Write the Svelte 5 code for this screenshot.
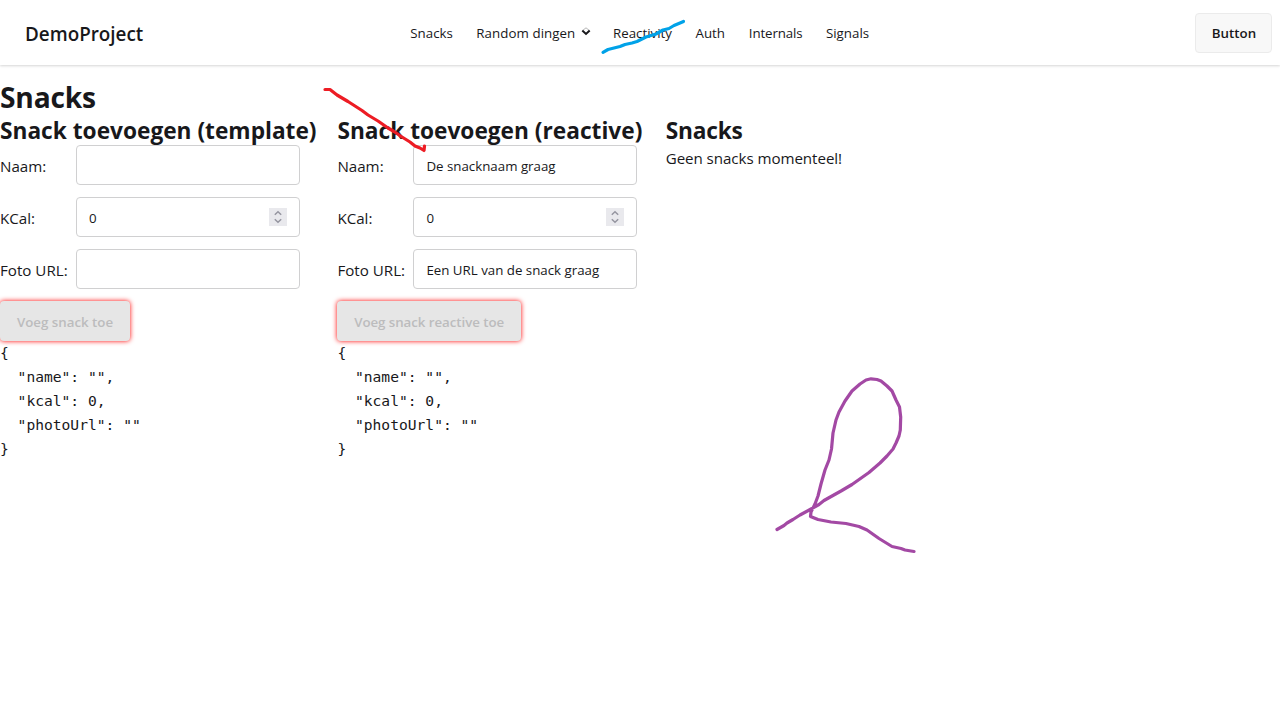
<script>
  const links = ['Snacks', 'Random dingen', 'Reactivity', 'Auth', 'Internals', 'Signals'];
  const forms = [
    { title: 'Snack toevoegen (template)', name: '', photo: '', submit: 'Voeg snack toe', cls: 'template' },
    {
      title: 'Snack toevoegen (reactive)',
      name: 'De snacknaam graag',
      photo: 'Een URL van de snack graag',
      submit: 'Voeg snack reactive toe',
      cls: 'reactive'
    }
  ];
  const json = JSON.stringify({ name: '', kcal: 0, photoUrl: '' }, null, 2);
</script>

<header>
  <a class="brand" href="#home">DemoProject</a>
  <nav>
    {#each links as link}
      <a href="#{link}">
        {link}
        {#if link === 'Random dingen'}
          <svg class="caret" width="10" height="9" viewBox="0 0 10 9" fill="none">
            <path d="M2 3.2 5 .8 8 3.2" stroke="#b5b5b5" stroke-width="1" />
            <path d="M1.3 3.4 5 6.9 8.7 3.4" stroke="#18181b" stroke-width="2" />
          </svg>
        {/if}
      </a>
    {/each}
  </nav>
  <button class="btn">Button</button>
</header>

<main>
  <h1>Snacks</h1>
  <div class="columns">
    {#each forms as form}
      <section class={form.cls}>
        <h2>{form.title}</h2>
        <form>
          <span class="label">Naam:</span>
          <div class="input">{form.name}</div>
          <span class="label">KCal:</span>
          <div class="input">
            0
            <svg class="spin" width="18" height="18" viewBox="0 0 18 18" fill="none">
              <rect width="18" height="18" fill="#e9e9ed" />
              <path d="M5.8 6.8 9 3.8l3.2 3M5.8 11.2l3.2 3 3.2-3" stroke="#9595a0" stroke-width="1.5" />
            </svg>
          </div>
          <span class="label">Foto URL:</span>
          <div class="input">{form.photo}</div>
        </form>
        <button class="submit" disabled>{form.submit}</button>
        <pre>{json}</pre>
      </section>
    {/each}
    <section>
      <h2>Snacks</h2>
      <p>Geen snacks momenteel!</p>
    </section>
  </div>
</main>

<svg class="ink" width="1280" height="720" viewBox="0 0 1280 720" fill="none" stroke-width="3.2" stroke-linecap="round" stroke-linejoin="round">
  <path stroke="#00a2e8" d="M603 52.300 608 49.5 620 46.500 625 44.500 632 43 637 41.500 646 37 656 34 663 30 669 28.500 674 25.500 680 23 683.500 21.500" />
  <path stroke="#ed1c24" d="M325 89.500H330L337 95 348 101.500 355 106 362 110.500 368 115 378 121 388 128 394 131.500 402 137 410 142 415 146 420 148 424 150.500 424.500 146" />
  <path stroke="#a349a4" d="M777 529.500 784 525.500 787 523 793 519.500 800 515 811 509 819 504.500 824 500.500 841 491 852 484.500 869 472.500 880 463 887 456 893 449 896 443 899 436 900.300 430 900.700 417 899.500 407 896 400 892 391 887 386 881 381 877 379.500 871 378.800 866 380 860 384 852 391 845 401 839 412 836 420 833 433 831.500 449 829 460 825 470 821 484 818 496 815 504 811 512 810.500 516.500 818 519.500 831 522 846 523.500 859 526.500 867 530 879 538.500 892 546.500 901 548.500 905 550 914 551.500" />
</svg>

<style>
  :global(body) {
    background: #fff;
    color: #18181b;
    font: 15.15px/24px "Open Sans", sans-serif;
    overflow: hidden;
  }
  header {
    box-sizing: border-box;
    height: 65px;
    padding: 0 8px 0 25px;
    display: grid;
    grid-template-columns: 385.3px 1fr 77px;
    align-items: center;
    box-shadow: 0 1px 3px rgba(0, 0, 0, 0.1), 0 1px 2px rgba(0, 0, 0, 0.07);
  }
  a {
    color: inherit;
    text-decoration: none;
  }
  .brand {
    font-size: 18.85px;
    font-weight: 600;
    padding-top: 2px;
  }
  nav {
    display: grid;
    grid-template-columns: 66px 136.700px 82.500px 53.300px 77.200px 60px;
    font-size: 13.3px;
    line-height: 20px;
    white-space: nowrap;
    padding-top: 1px;
  }
  nav a {
    display: flex;
    gap: 6px;
  }
  nav a:nth-child(2) {
    letter-spacing: 0.07px;
  }
  nav a:nth-child(5) {
    letter-spacing: -0.12px;
  }
  .caret {
    margin-top: 4px;
  }
  .btn {
    height: 40px;
    padding: 1px 0 0 1px;
    border: 1px solid #ebebeb;
    border-radius: 4px;
    background: #f8f8f8;
    color: #18181b;
    font: 600 13.3px/20px "Open Sans", sans-serif;
  }
  h1,
  h2,
  p,
  pre {
    margin: 0;
  }
  main {
    padding-top: 14px;
  }
  h1 {
    font-size: 28.2px;
    line-height: 36px;
    letter-spacing: -0.2px;
  }
  .columns {
    display: grid;
    grid-template-columns: 317.400px 308.300px 1fr;
    column-gap: 20px;
  }
  h2 {
    box-sizing: border-box;
    height: 30px;
    padding-top: 1px;
    font-size: 22.7px;
    line-height: 30px;
    white-space: nowrap;
  }
  section:last-child h2 {
    letter-spacing: -0.2px;
  }
  p {
    padding-top: 1px;
    letter-spacing: -0.06px;
  }
  form {
    display: grid;
    grid-template-columns: 68px 224px;
    gap: 12px 8px;
    align-items: center;
    white-space: nowrap;
  }
  .label {
    padding-top: 2px;
  }
  .input {
    box-sizing: border-box;
    height: 40px;
    padding: 2px 12px 0;
    border: 1px solid #d0d0d1;
    border-radius: 4px;
    display: flex;
    align-items: center;
    justify-content: space-between;
    font-size: 13.3px;
  }
  .spin {
    margin-top: -3px;
  }
  .submit {
    display: block;
    width: 130px;
    height: 40px;
    margin: 12px 0 0;
    padding: 2px 0 0;
    border: 0;
    border-radius: 4px;
    background: #e6e6e6;
    color: #bcbcbd;
    box-shadow: 0 0 5px #f00;
    font: 600 13.3px/20px "Open Sans", sans-serif;
  }
  .reactive .submit {
    width: 183.500px;
    letter-spacing: -0.05px;
  }
  pre {
    font: 14.61px/24px "DejaVu Sans Mono", monospace;
  }
  .ink {
    position: absolute;
    left: 0;
    top: 0;
    pointer-events: none;
  }
</style>
